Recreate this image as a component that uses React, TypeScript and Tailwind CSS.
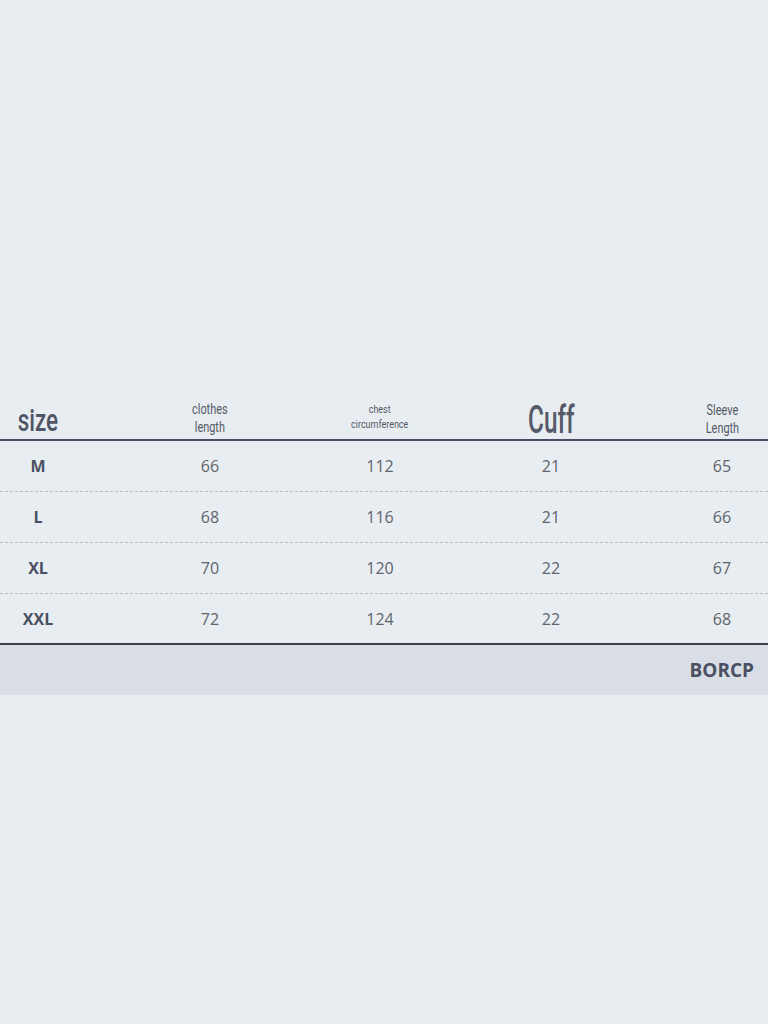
import React from 'react';

const rows = [
  ['M', '66', '112', '21', '65'],
  ['L', '68', '116', '21', '66'],
  ['XL', '70', '120', '22', '67'],
  ['XXL', '72', '124', '22', '68'],
];

const cond = { fontFamily: 'Roboto, "DejaVu Sans Condensed", sans-serif' };
const body = { fontFamily: '"Open Sans", "Noto Sans", sans-serif' };

function Cond({ children, className }: { children: React.ReactNode; className: string }) {
  return (
    <span className={`inline-block origin-center ${className}`} style={cond}>
      {children}
    </span>
  );
}

export default function App() {
  const cols = 'grid grid-cols-[124px_172px_168px_174px_1fr]';
  return (
    <div className="min-h-[1024px] w-full bg-[#e8edf1] pt-[395px]">
      <div className={`${cols} h-[46px] items-end border-b-2 border-[#474c63]`}>
        <div className="pr-[48px] text-center leading-none pb-[3px]">
          <Cond className="scale-x-[0.7] font-medium text-[32px] text-[#505566]">size</Cond>
        </div>
        <div className="text-center pb-[3px] leading-[18px]">
          <Cond className="scale-x-[0.78] text-[14px] text-[#555a66]">
            clothes
            <br />
            length
          </Cond>
        </div>
        <div className="text-center pb-[7px] leading-[15px]">
          <Cond className="scale-x-[0.78] text-[11.5px] text-[#555a66]">
            chest
            <br />
            circumference
          </Cond>
        </div>
        <div className="text-center leading-none pb-0">
          <Cond className="scale-x-[0.64] font-medium text-[38px] text-[#555a6a]">Cuff</Cond>
        </div>
        <div className="pl-[38px] text-center pb-[2px] leading-[18px]">
          <Cond className="scale-x-[0.78] text-[14px] text-[#555a66]">
            Sleeve
            <br />
            Length
          </Cond>
        </div>
      </div>
      {rows.map((r, i) => (
        <div
          key={r[0]}
          className={`${cols} h-[51px] items-center ${
            i < rows.length - 1 ? 'border-b border-dashed border-[#b7bcc4]' : 'border-b-2 border-[#3c404c]'
          }`}
          style={body}
        >
          <div className="pr-[48px] text-center text-[16px] font-bold text-[#4a5062]">{r[0]}</div>
          <div className="text-center text-[16px] text-[#60646d]">{r[1]}</div>
          <div className="text-center text-[16px] text-[#60646d]">{r[2]}</div>
          <div className="text-center text-[16px] text-[#60646d]">{r[3]}</div>
          <div className="pl-[38px] text-center text-[16px] text-[#60646d]">{r[4]}</div>
        </div>
      ))}
      <div className="flex h-[50px] items-center justify-end bg-[#d8dde6] pr-[14px]" style={body}>
        <span className="text-[19px] font-bold text-[#4a5062]">BORCP</span>
      </div>
    </div>
  );
}
